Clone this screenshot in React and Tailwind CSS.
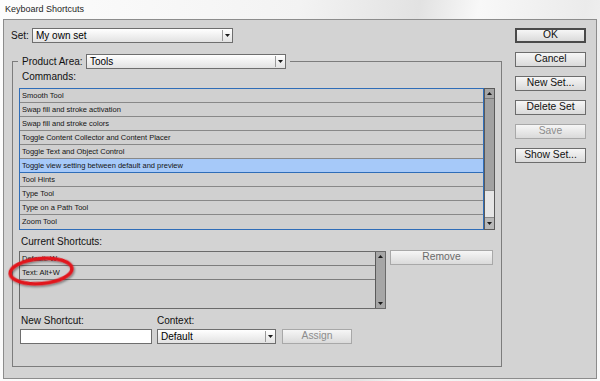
const commands = [
  "Smooth Tool",
  "Swap fill and stroke activation",
  "Swap fill and stroke colors",
  "Toggle Content Collector and Content Placer",
  "Toggle Text and Object Control",
  "Toggle view setting between default and preview",
  "Tool Hints",
  "Type Tool",
  "Type on a Path Tool",
  "Zoom Tool",
];

const Tri = ({ up }) => (
  <svg width="5" height="3" viewBox="0 0 5 3" className="block">
    <path d={up ? "M0 3 L2.5 0 L5 3 Z" : "M0 0 L5 0 L2.5 3 Z"} fill="#1a1a1a" />
  </svg>
);

function Dropdown({ value, className }) {
  return (
    <div className={`flex h-[15px] border border-[#6e6e6e] bg-linear-to-b from-white to-[#e2e2e2] ${className}`}>
      <span className="flex-1 pl-[3px] text-[10px] leading-[13px] text-black">{value}</span>
      <span className="my-[1px] flex w-[10px] items-center justify-center border-l border-[#9a9a9a]">
        <Tri />
      </span>
    </div>
  );
}

function Btn({ children, className = "", disabled, primary }) {
  const border = primary
    ? "border-2 border-[#4a4a4a]"
    : disabled
    ? "border border-[#a8a8a8]"
    : "border border-[#6c6c6c]";
  const text = disabled ? "text-[#8c8c8c]" : "text-[#111]";
  return (
    <div
      className={`flex h-[15px] items-center justify-center bg-linear-to-b from-[#f6f6f6] to-[#dadada] text-[10.3px] leading-none ${border} ${text} ${className}`}
    >
      {children}
    </div>
  );
}

export default function App() {
  return (
    <div className="relative h-[381px] w-[600px] overflow-hidden bg-[linear-gradient(100deg,#fdfdfd_0%,#f3f3f3_45%,#e2e2e2_63%,#f8f8f8_72%,#ebebeb_88%,#fafafa_100%)] font-['Liberation_Sans',Arial,sans-serif]">
      <div className="h-[19px] pl-[5px] text-[9px] leading-[18px] text-[#1e1e1e]">Keyboard Shortcuts</div>

      <div className="mx-[3px] flex h-[360px] border border-[#8c8c8c] bg-[#d3d3d3]">
        <div className="flex-1 pl-[7px] pt-[8px]">
          <div className="flex items-center">
            <span className="w-[21px] text-[10px] leading-[14px] text-[#111]">Set:</span>
            <Dropdown value="My own set" className="w-[201px]" />
          </div>

          <fieldset className="ml-[1px] mt-[11px] h-[313px] w-[490px] border border-[#7c7c7c] p-0">
            <legend className="ml-[5px] px-[4px]">
              <div className="flex items-center">
                <span className="w-[64px] text-[10px] leading-[15px] text-[#111]">Product Area:</span>
                <Dropdown value="Tools" className="w-[200px]" />
              </div>
            </legend>

            <div className="px-[6px]">
              <div className="h-[19px] pl-[3px] pt-[2px] text-[10px] leading-[12px] text-[#111]">Commands:</div>

              <div className="flex h-[142px] w-[476px]">
                <div className="flex-1 border border-[#2f6db8] bg-[#d0d0d0]">
                  {commands.map((c, i) => (
                    <div
                      key={c}
                      className={`h-[14px] border-b pl-[2px] text-[7.5px] leading-[13px] text-[#141414] ${
                        i === 5 ? "border-[#2f6db8] bg-[#a6c9f9]" : "border-[#888888]"
                      } ${i === 9 ? "border-b-0" : ""}`}
                    >
                      {c}
                    </div>
                  ))}
                </div>
                <div className="flex w-[11px] flex-col border border-[#5a5a5a] bg-[#a6a6a6]">
                  <div className="flex h-[10px] items-center justify-center border-b border-[#7a7a7a]">
                    <Tri up />
                  </div>
                  <div className="flex-1 bg-[#a2a2a2]" />
                  <div className="h-[28px] border-y border-[#8a8a8a] bg-[#e6e6e6]" />
                  <div className="flex h-[11px] items-center justify-center bg-[#b8b8b8]">
                    <Tri />
                  </div>
                </div>
              </div>

              <div className="h-[21px] pl-[2px] pt-[6px] text-[10px] leading-[12px] text-[#111]">Current Shortcuts:</div>

              <div className="flex items-start">
                <div className="flex h-[58px] w-[367px] border border-[#6a6a6a] bg-[#d0d0d0]">
                  <div className="flex-1">
                    <div className="h-[14px] border-b border-[#7c7c7c] pl-[2px] text-[7.5px] leading-[13px] text-[#141414]">
                      Default: W
                    </div>
                    <div className="h-[14px] border-b border-[#7c7c7c] pl-[2px] text-[7.5px] leading-[13px] text-[#141414]">
                      Text: Alt+W
                    </div>
                  </div>
                  <div className="flex w-[10px] flex-col justify-between border-l border-[#5a5a5a] bg-[#a6a6a6] py-[3px]">
                    <div className="flex justify-center">
                      <Tri up />
                    </div>
                    <div className="flex justify-center">
                      <Tri />
                    </div>
                  </div>
                </div>
                <Btn disabled className="-mt-px ml-[4px] w-[103px] !text-[#6a6a6a]">
                  Remove
                </Btn>
              </div>

              <div className="flex">
                <div className="w-[138px]">
                  <div className="h-[20px] pl-[2px] pt-[6px] text-[10px] leading-[12px] text-[#111]">New Shortcut:</div>
                  <div className="ml-[1px] h-[15px] w-[132px] border border-[#6e6e6e] bg-white" />
                </div>
                <div>
                  <div className="h-[20px] pt-[6px] text-[10px] leading-[12px] text-[#111]">Context:</div>
                  <div className="flex">
                    <Dropdown value="Default" className="w-[119px]" />
                    <Btn disabled className="ml-[6px] w-[70px]">
                      Assign
                    </Btn>
                  </div>
                </div>
              </div>
            </div>
          </fieldset>
        </div>

        <div className="mr-[10px] flex w-[71px] flex-col gap-[9px] pt-[8px]">
          <Btn primary>OK</Btn>
          <Btn>Cancel</Btn>
          <Btn>New Set...</Btn>
          <Btn>Delete Set</Btn>
          <Btn disabled>Save</Btn>
          <Btn>Show Set...</Btn>
        </div>
      </div>

      <svg className="absolute left-[4px] top-[252px]" width="74" height="38" viewBox="0 0 74 38">
        <defs>
          <filter id="sh" x="-20%" y="-30%" width="140%" height="160%">
            <feDropShadow dx="1" dy="1.5" stdDeviation="1.2" floodColor="#000" floodOpacity="0.45" />
          </filter>
        </defs>
        <ellipse
          cx="37"
          cy="19"
          rx="31"
          ry="12.5"
          transform="rotate(-5 37 19)"
          fill="none"
          stroke="#e2121b"
          strokeWidth="3.4"
          filter="url(#sh)"
        />
      </svg>
    </div>
  );
}
